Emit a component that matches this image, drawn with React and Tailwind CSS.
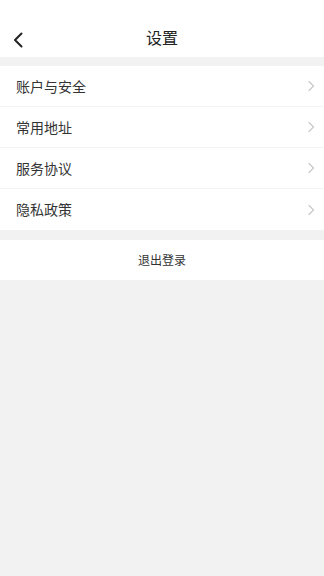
const items = ["账户与安全", "常用地址", "服务协议", "隐私政策"];

const font = { fontFamily: '"Noto Sans CJK SC", "Noto Sans", sans-serif' };

export default function App() {
  return (
    <div className="min-h-[576px] w-full bg-[#f1f2f1]" style={font}>
      {/* Header */}
      <div className="relative h-[57px] bg-white flex items-end justify-center pb-[8px]">
        <button className="absolute left-[12px] bottom-[9px] text-[#222]">
          <svg width="12" height="16" viewBox="0 0 12 16" fill="none">
            <path d="M9.5 1.5 L3 8 L9.5 14.5" stroke="currentColor" strokeWidth="2" strokeLinecap="round" strokeLinejoin="round" />
          </svg>
        </button>
        <span className="text-[16px] leading-[24px] text-[#222]">设置</span>
      </div>

      {/* List */}
      <div className="mt-[9px] bg-white">
        {items.map((label, i) => (
          <div
            key={label}
            className={`h-[41px] flex items-center justify-between pl-[16px] pr-[8px] ${
              i < items.length - 1 ? "border-b border-[#f4f4f4]" : ""
            }`}
          >
            <span className="text-[14px] text-[#333]">{label}</span>
            <svg width="10" height="12" viewBox="0 0 10 12" fill="none">
              <path d="M3 1.5 L7.5 6 L3 10.5" stroke="#c8c8c8" strokeWidth="1.2" strokeLinecap="round" strokeLinejoin="round" />
            </svg>
          </div>
        ))}
      </div>

      {/* Logout */}
      <div className="mt-[10px] h-[40px] bg-white flex items-center justify-center">
        <span className="text-[12px] text-[#333]">退出登录</span>
      </div>
    </div>
  );
}
